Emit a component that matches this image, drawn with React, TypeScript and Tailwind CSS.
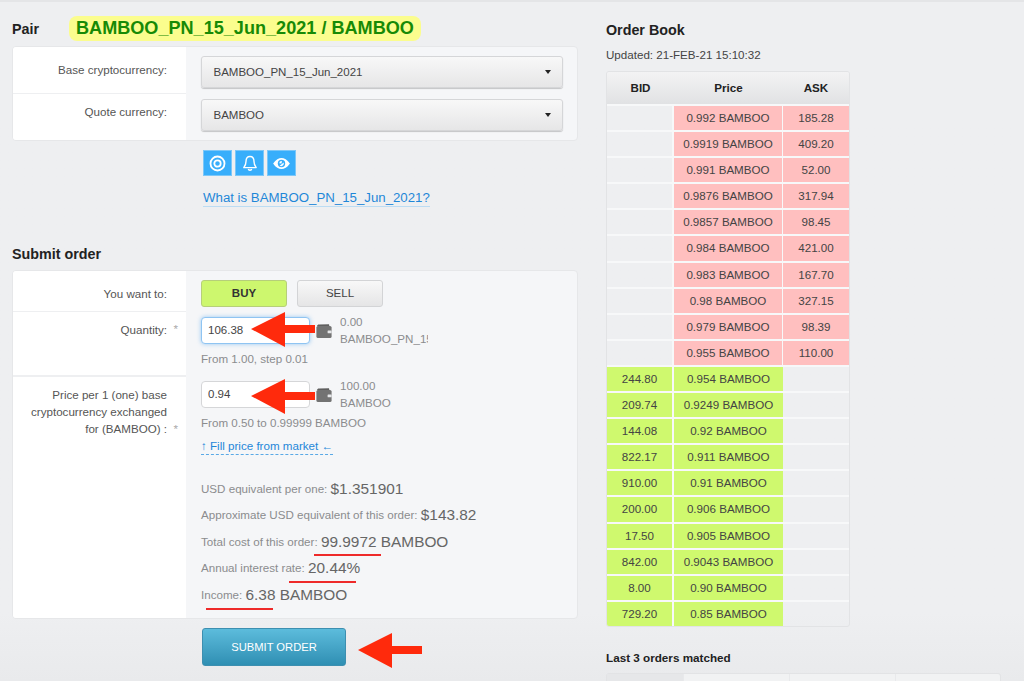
import React from "react"

const asks = [
  ["0.992 BAMBOO", "185.28"],
  ["0.9919 BAMBOO", "409.20"],
  ["0.991 BAMBOO", "52.00"],
  ["0.9876 BAMBOO", "317.94"],
  ["0.9857 BAMBOO", "98.45"],
  ["0.984 BAMBOO", "421.00"],
  ["0.983 BAMBOO", "167.70"],
  ["0.98 BAMBOO", "327.15"],
  ["0.979 BAMBOO", "98.39"],
  ["0.955 BAMBOO", "110.00"]
]

const bids = [
  ["244.80", "0.954 BAMBOO"],
  ["209.74", "0.9249 BAMBOO"],
  ["144.08", "0.92 BAMBOO"],
  ["822.17", "0.911 BAMBOO"],
  ["910.00", "0.91 BAMBOO"],
  ["200.00", "0.906 BAMBOO"],
  ["17.50", "0.905 BAMBOO"],
  ["842.00", "0.9043 BAMBOO"],
  ["8.00", "0.90 BAMBOO"],
  ["729.20", "0.85 BAMBOO"]
]

const Arrow = ({ x, y }: { x: number; y: number }) => (
  <svg
    className="pointer-events-none absolute"
    style={{ left: x, top: y }}
    width="66"
    height="38"
    viewBox="0 0 66 38"
  >
    <polygon points="1,18 35,1 35,14 65,14 65,22 35,22 35,36" fill="#ff2a0c" />
  </svg>
)

const Underline = ({ x, y, w }: { x: number; y: number; w: number }) => (
  <div className="absolute h-[1.5px] bg-[#ee2a2a]" style={{ left: x, top: y, width: w }} />
)

const Wallet = () => (
  <svg width="16" height="14" viewBox="0 0 16 14" className="shrink-0">
    <path d="M1 2.2 C1 1 2 0.4 3 0.4 L13 0.2 L13.4 2.2 Z" fill="#5f5f5f" />
    <rect x="0.4" y="2" width="15.2" height="12" rx="1.6" fill="#737373" />
    <rect x="11.6" y="6.6" width="4" height="2.6" rx="0.5" fill="#e6e7e9" />
  </svg>
)

const SelectBox = ({ value }: { value: string }) => (
  <div className="flex h-[32px] w-[362px] items-center justify-between rounded-[3px] border border-[#d5d6d8] bg-gradient-to-b from-[#f8f8f8] to-[#e6e6e7] pl-[11.5px] pr-[11px] text-[11.5px] text-[#444] shadow-[0_1px_1px_rgba(0,0,0,0.2)]">
    <span className="pt-[1px]">{value}</span>
    <span className="h-0 w-0 border-x-[3.5px] border-t-[4px] border-x-transparent border-t-[#222]"></span>
  </div>
)

const Stat = ({ label, value }: { label: string; value: string }) => (
  <div className="flex h-[26.5px] items-center whitespace-nowrap text-[11.6px] text-[#8b8c8e]">
    {label}&nbsp;<span className="text-[15.4px] text-[#666]">{value}</span>
  </div>
)

const App = () => {
  return (
    <div
      className="relative h-[681px] w-[1024px] overflow-hidden border-t-2 border-[#e4e5e7] bg-gradient-to-b from-[#eeeff1] from-90% to-[#e9eaec] text-[11.6px]"
      style={{ fontFamily: '"Liberation Sans", Arial, sans-serif' }}
    >
      <div className="flex">
        <div className="ml-[12px] w-[566px]">
          <div className="flex h-[44px] items-end pb-[5px]">
            <div className="w-[57px] pb-[1px] text-[14.3px] font-bold text-[#222]">Pair</div>
            <div className="flex h-[25px] items-center rounded-[8px] bg-[#fbfd8e] px-[7px] text-[18.1px] font-bold text-[#178a06]">
              BAMBOO_PN_15_Jun_2021 / BAMBOO
            </div>
          </div>

          <div className="flex h-[95px] overflow-hidden rounded-[4px] border border-[#e6e7e9] bg-[#f5f6f8]">
            <div className="w-[173px] bg-white text-[11.6px] text-[#555]">
              <div className="h-[47px] border-b border-[#eeeff1] pr-[19px] pt-[14px] text-right">Base cryptocurrency:</div>
              <div className="pr-[19px] pt-[9px] text-right">Quote currency:</div>
            </div>
            <div className="flex flex-col gap-[11px] pl-[15px] pt-[9px]">
              <SelectBox value="BAMBOO_PN_15_Jun_2021" />
              <SelectBox value="BAMBOO" />
            </div>
          </div>

          <div className="ml-[191px] mt-[9px] flex gap-[3px]">
            <div className="flex h-[26px] w-[29px] items-center justify-center border border-[#7cc7f8] bg-[#38aefb]">
              <svg width="17" height="17" viewBox="0 0 16 16" fill="none" stroke="#fff">
                <circle cx="8" cy="8" r="6.6" strokeWidth="1.7" />
                <circle cx="8" cy="8" r="3" strokeWidth="1.7" />
              </svg>
            </div>
            <div className="flex h-[26px] w-[29px] items-center justify-center border border-[#7cc7f8] bg-[#38aefb]">
              <svg width="16" height="17" viewBox="0 0 16 17" fill="none" stroke="#fff" strokeWidth="1.4">
                <path d="M8 1.5 C5 1.5 4 4 4 6.5 C4 9.5 3.2 10.8 1.8 12.6 L14.2 12.6 C12.8 10.8 12 9.5 12 6.5 C12 4 11 1.5 8 1.5 Z" strokeLinejoin="round" />
                <path d="M6.3 14 C6.6 15.6 9.4 15.6 9.7 14" />
              </svg>
            </div>
            <div className="flex h-[26px] w-[29px] items-center justify-center border border-[#7cc7f8] bg-[#38aefb]">
              <svg width="19" height="13" viewBox="0 0 20 14">
                <path d="M1 7 C4 2.5 7 1 10 1 C13 1 16 2.5 19 7 C16 11.5 13 13 10 13 C7 13 4 11.5 1 7 Z" fill="#fff" />
                <circle cx="10" cy="7" r="4" fill="#38aefb" />
                <path d="M7.6 6.6 A2.6 2.6 0 0 1 10.4 4.2 L10 7 Z M12.4 6 A3 3 0 0 1 8 9.4" fill="#fff" />
              </svg>
            </div>
          </div>

          <div className="ml-[191px] mt-[14px] w-max border-b border-[#bcdcf3] text-[13.25px] leading-[16px] text-[#1e87d8]">
            What is BAMBOO_PN_15_Jun_2021?
          </div>

          <div className="mt-[37px] h-[20px] text-[14.3px] font-bold leading-[20px] text-[#222]">Submit order</div>

          <div className="mt-[6px] flex h-[349px] overflow-hidden rounded-[4px] border border-[#e6e7e9] bg-[#f5f6f8]">
            <div className="w-[173px] shrink-0 bg-white text-[11.6px] text-[#555]">
              <div className="h-[41px] border-b border-[#eeeff1] pr-[19px] pt-[14px] text-right">You want to:</div>
              <div className="relative h-[65px] border-b-2 border-[#eeeff1] pr-[19px] pt-[9px] text-right">
                Quantity:
                <span className="absolute right-[8px] top-[8px] text-[#aaa]">*</span>
              </div>
              <div className="relative pr-[19px] pt-[9px] text-right leading-[17.2px]">
                Price per 1 (one) base
                <br />
                cryptocurrency exchanged
                <br />
                for (BAMBOO) :
                <span className="absolute right-[8px] top-[43px] text-[#aaa]">*</span>
              </div>
            </div>

            <div className="pl-[15px]">
              <div className="mt-[9px] flex gap-[10px]">
                <div className="flex h-[27px] w-[86px] items-center justify-center rounded-[3px] border border-[#b6cf7a] bg-[#cdf76e] text-[11.5px] font-bold text-[#333]">
                  BUY
                </div>
                <div className="flex h-[27px] w-[86px] items-center justify-center rounded-[3px] border border-[#d3d4d6] bg-gradient-to-b from-[#f8f8f8] to-[#e5e5e6] text-[11.5px] text-[#444]">
                  SELL
                </div>
              </div>

              <div className="mt-[10px] flex h-[35px]">
                <div className="flex h-[27px] w-[109px] items-center rounded-[4px] border border-[#8fc4f2] bg-white pl-[6px] text-[11.5px] text-[#444] shadow-[0_0_4px_rgba(90,170,240,0.6)]">
                  106.38
                </div>
                <div className="ml-[6px] mt-[7px]">
                  <Wallet />
                </div>
                <div className="-mt-[4px] ml-[8px] h-[38px] w-[88px] overflow-hidden whitespace-nowrap text-[11.6px] leading-[17px] text-[#8b8c8e]">
                  0.00
                  <br />
                  BAMBOO_PN_15
                </div>
              </div>
              <div className="h-[29px] leading-[14px] text-[#8b8c8e]">From 1.00, step 0.01</div>

              <div className="flex h-[35px]">
                <div className="flex h-[27px] w-[109px] items-center rounded-[4px] border border-[#d5d6d8] bg-white pl-[6px] text-[11.5px] text-[#444]">
                  0.94
                </div>
                <div className="ml-[6px] mt-[7px]">
                  <Wallet />
                </div>
                <div className="-mt-[4px] ml-[8px] whitespace-nowrap text-[11.6px] leading-[17px] text-[#8b8c8e]">
                  100.00
                  <br />
                  BAMBOO
                </div>
              </div>
              <div className="leading-[14px] text-[#8b8c8e]">From 0.50 to 0.99999 BAMBOO</div>
              <div className="mt-[9px] w-max border-b border-dashed border-[#5aa9e6] pb-[1px] leading-[14px] text-[#1e87d8]">
                ↑ Fill price from market ←
              </div>

              <div className="mt-[20px]">
                <Stat label="USD equivalent per one:" value="$1.351901" />
                <Stat label="Approximate USD equivalent of this order:" value="$143.82" />
                <Stat label="Total cost of this order:" value="99.9972 BAMBOO" />
                <Stat label="Annual interest rate:" value="20.44%" />
                <Stat label="Income:" value="6.38 BAMBOO" />
              </div>
            </div>
          </div>

          <div className="ml-[190px] mt-[9px] flex h-[38px] w-[144px] items-center justify-center rounded-[3px] border border-[#3d8fb0] bg-gradient-to-b from-[#5cbcdc] to-[#2f8fb3] text-[11.2px] text-white">
            SUBMIT ORDER
          </div>
        </div>

        <div className="ml-[28px] w-[395px]">
          <div className="mt-[19px] text-[14.3px] font-bold leading-[18px] text-[#222]">Order Book</div>
          <div className="mt-[9px] text-[11.6px] leading-[14px] text-[#444]">Updated: 21-FEB-21 15:10:32</div>

          <div className="mt-[9px] w-[244px] overflow-hidden rounded-[3px] border border-[#e2e3e5] text-center text-[11.6px] text-[#444]">
            <div className="grid h-[32px] grid-cols-[67px_109px_66px] items-center bg-gradient-to-b from-[#f3f3f4] to-[#e1e2e4] text-[11.6px] font-bold text-[#222]">
              <div>BID</div>
              <div>Price</div>
              <div>ASK</div>
            </div>
            {asks.map(([price, ask]) => (
              <div key={price} className="grid h-[26.1px] grid-cols-[67px_109px_66px] border-t-2 border-[#f7f8f9]">
                <div className="border-r-2 border-[#f7f8f9]"></div>
                <div className="border-r border-[#f7f8f9] bg-[#ffbfbf] leading-[24px]">{price}</div>
                <div className="bg-[#ffbfbf] leading-[24px]">{ask}</div>
              </div>
            ))}
            {bids.map(([bid, price]) => (
              <div key={price} className="grid h-[26.1px] grid-cols-[67px_109px_66px] border-t-2 border-[#f7f8f9]">
                <div className="border-r-2 border-[#f7f8f9] bg-[#cff96e] leading-[24px]">{bid}</div>
                <div className="bg-[#cff96e] leading-[24px]">{price}</div>
                <div></div>
              </div>
            ))}
          </div>

          <div className="mt-[24px] text-[11.7px] font-bold leading-[14px] text-[#222]">Last 3 orders matched</div>
          <div className="mt-[8px] grid h-[30px] grid-cols-[76px_106px_106px_107px] rounded-t-[3px] border border-[#e2e3e5] bg-[#f1f2f3]">
            <div className="bg-[#e6e7e9]"></div>
            <div className="border-l border-[#e8e9eb]"></div>
            <div className="border-l border-[#e8e9eb]"></div>
            <div className="border-l border-[#e8e9eb]"></div>
          </div>
        </div>
      </div>

      <Arrow x={250} y={309} />
      <Arrow x={250} y={376} />
      <Arrow x={357} y={630} />
      <Underline x={314} y={552} w={67} />
      <Underline x={289} y={579} w={67} />
      <Underline x={206} y={606} w={67} />
    </div>
  )
}

export default App
